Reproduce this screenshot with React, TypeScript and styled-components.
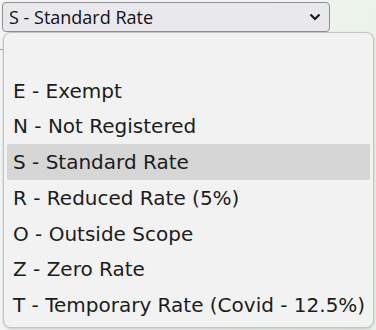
import React from 'react';
import styled, { createGlobalStyle } from 'styled-components';

const options = [
  '',
  'E - Exempt',
  'N - Not Registered',
  'S - Standard Rate',
  'R - Reduced Rate (5%)',
  'O - Outside Scope',
  'Z - Zero Rate',
  'T - Temporary Rate (Covid - 12.5%)',
];

const selected = 'S - Standard Rate';

const GlobalStyle = createGlobalStyle`
  html, body {
    margin: 0;
    padding: 0;
    width: 376px;
    height: 330px;
    overflow: hidden;
    background: linear-gradient(100deg, #f4f4f4 0%, #f1f4ef 60%, #e9f3e6 100%);
  }
`;

const Page = styled.div`
  position: relative;
  width: 376px;
  height: 330px;
  padding: 2px 0 0 2px;
  box-sizing: border-box;
`;

const Rule = styled.div`
  position: absolute;
  left: 0;
  top: 49px;
  width: 4px;
  height: 1px;
  background: #a8a8a8;
`;

const Select = styled.div`
  box-sizing: border-box;
  width: 328px;
  height: 30px;
  display: flex;
  align-items: center;
  justify-content: space-between;
  padding: 0 8px 0 6px;
  border: 1px solid #8f8f95;
  border-radius: 4px;
  background: #e9e8ed;
  font-family: 'Open Sans', 'Liberation Sans', sans-serif;
  font-size: 18px;
  color: #111;
`;

const Chevron = () => (
  <svg width="12" height="8" viewBox="0 0 12 8">
    <path d="M1.5 1.5 L6 6 L10.5 1.5" fill="none" stroke="#1a1a1a" strokeWidth="2.2" />
  </svg>
);

const List = styled.div`
  position: absolute;
  left: 3px;
  top: 32px;
  width: 371px;
  height: 296px;
  box-sizing: border-box;
  padding: 4px 3px;
  border: 1px solid #c4c4c4;
  border-radius: 8px;
  background: #f2f2f2;
  box-shadow: 0 1px 3px rgba(0, 0, 0, 0.18);
  display: flex;
  flex-direction: column;
`;

const Option = styled.div<{ $active?: boolean }>`
  height: 35.75px;
  display: flex;
  align-items: center;
  padding-left: 6px;
  border-radius: 2px;
  background: ${p => (p.$active ? '#d6d6d6' : 'transparent')};
  font-family: 'DejaVu Sans', Verdana, sans-serif;
  font-size: 20px;
  color: #1c1c1c;
  white-space: nowrap;
`;

export default function App() {
  return (
    <>
      <GlobalStyle />
      <Page>
        <Rule />
        <Select>
          <span>{selected}</span>
          <Chevron />
        </Select>
        <List>
          {options.map((o, i) => (
            <Option key={i} $active={o === selected}>
              {o}
            </Option>
          ))}
        </List>
      </Page>
    </>
  );
}
